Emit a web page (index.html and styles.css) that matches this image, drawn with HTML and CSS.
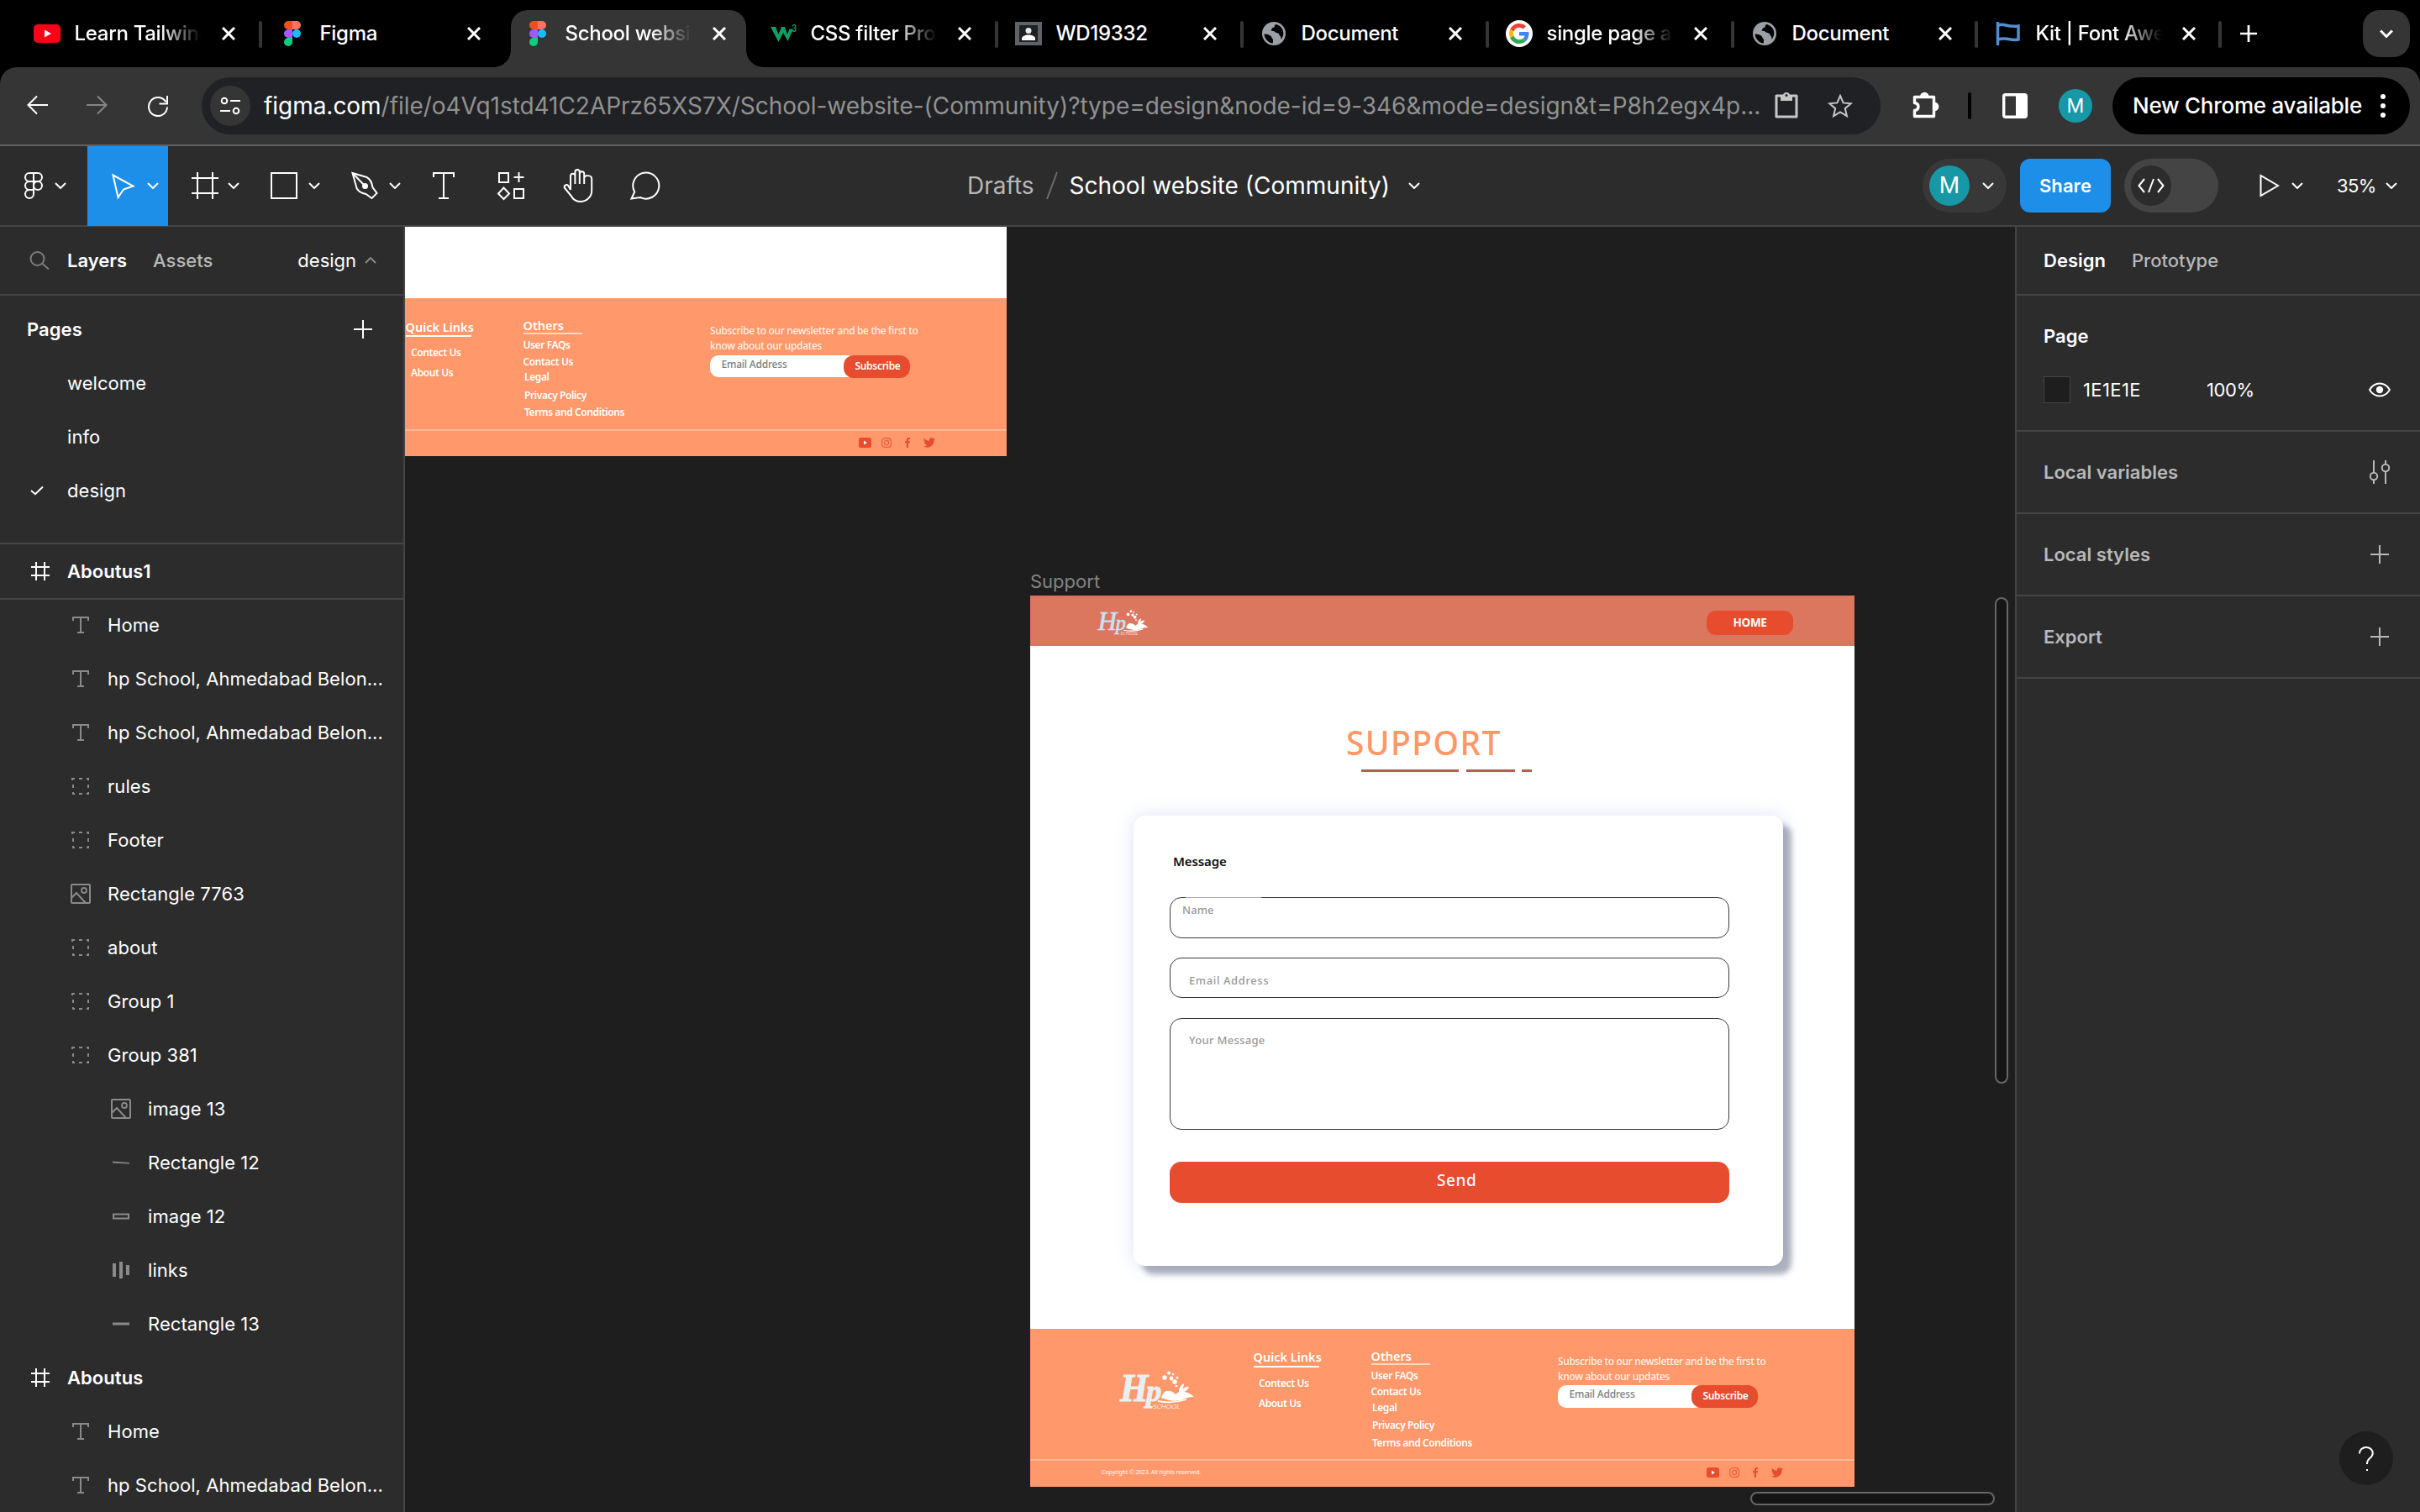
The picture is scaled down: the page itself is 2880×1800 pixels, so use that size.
FILE: index.html
```
<!DOCTYPE html>
<html lang="en">
<head>
<meta charset="utf-8">
<title>School website (Community)</title>
<link rel="stylesheet" href="styles.css">
</head>
<body>
<svg class="sprite" aria-hidden="true">
  <symbol id="x" viewBox="0 0 16 16"><path d="M1 1l14 14M15 1L1 15" stroke="#fff" stroke-width="3" fill="none"/></symbol>
  <symbol id="chev" viewBox="0 0 14 8"><path d="M1 1l6 6 6-6" stroke="currentColor" fill="none"/></symbol>
  <symbol id="plus" viewBox="0 0 22 22"><path d="M11 0v22M0 11h22" stroke="currentColor"/></symbol>
  <symbol id="figma" viewBox="0 0 20 30"><path d="M10 0H5a5 5 0 0 0 0 10h5z" fill="#f24e1e"/><path d="M10 0h5a5 5 0 0 1 0 10h-5z" fill="#ff7262"/><path d="M10 10H5a5 5 0 0 0 0 10h5z" fill="#a259ff"/><circle cx="15" cy="15" r="5" fill="#1abcfe"/><path d="M10 20H5a5 5 0 1 0 5 5z" fill="#0acf83"/></symbol>
  <symbol id="globe" viewBox="0 0 28 28"><circle cx="14" cy="14" r="14" fill="#9aa0a6"/><path d="M2.5 14.500c3.500.2 6 .6 8 2.600 1 1 .5 2.200 1.800 2.800 1.200.6.6 2.500.5 5.600C7.500 25 3 20.500 2.500 14.500zM17 3c-1.500 0-2.300 1.200-2.200 2.600.1 1.500-1.800.9-2.800 1.900-1.200 1.200-.2 2.300-2 3 2.500.6 4.500.2 6 2 .8 1 2.200 1 3.300 1.200 1.700.4.600 2.400 2 3 .9.400 1.400 2 1.200 4.200C27.500 15 26 6 17 3z" fill="#000"/></symbol>
  <symbol id="hash" viewBox="0 0 24 24"><path d="M7 1v22M17 1v22M1 7h22M1 17h22" stroke="#fff" stroke-width="2"/></symbol>
  <symbol id="t" viewBox="0 0 24 24"><path d="M3 7V3h18v4M12 3v18M8 21h8" stroke="#8a8a8a" stroke-width="2" fill="none"/></symbol>
  <symbol id="group" viewBox="0 0 24 24"><path d="M2 5V3h3M10 3h4M19 3h2v2M21 10v4M21 19v2h-2M14 21h-4M5 21H3v-2M3 14v-4" stroke="#8a8a8a" stroke-width="2" fill="none"/></symbol>
  <symbol id="img" viewBox="0 0 24 24"><rect x="1" y="1" width="22" height="22" rx="1" stroke="#8a8a8a" stroke-width="2" fill="none"/><circle cx="16" cy="8" r="3" stroke="#8a8a8a" stroke-width="1.800" fill="none"/><path d="M1 17l6-6 11 12" stroke="#8a8a8a" stroke-width="2" fill="none"/></symbol>
  <symbol id="yt" viewBox="0 0 15 12"><rect width="15" height="12" rx="2.500" fill="#e74c2e"/><path d="M6 3.500v5L9.800 6z" fill="#fff"/></symbol>
  <symbol id="ig" viewBox="0 0 12 12"><rect x=".7" y=".7" width="10.600" height="10.600" rx="3" fill="none" stroke="#e9603f" stroke-width="1.200"/><circle cx="6" cy="6" r="2.600" fill="none" stroke="#e9603f" stroke-width="1.200"/><circle cx="9" cy="3" r=".7" fill="#e9603f"/></symbol>
  <symbol id="fb" viewBox="0 0 6 12"><path d="M6 .1V2H5c-.8 0-1 .4-1 1v1.300h2l-.3 2H4V12H1.800V6.300H0v-2h1.800V2.700C1.800.9 2.900 0 4.500 0z" fill="#e74c2e"/></symbol>
  <symbol id="tw" viewBox="0 0 24 20"><path d="M24 2.400c-.9.400-1.800.6-2.800.8 1-.6 1.800-1.600 2.200-2.700-1 .6-2 1-3.100 1.200a4.900 4.900 0 0 0-8.400 4.500C7.700 6 4.100 4 1.700.9.400 3.200 1 6 3.200 7.500c-.8 0-1.600-.3-2.200-.6 0 2.300 1.600 4.400 3.900 4.900-.7.200-1.500.2-2.200.1a4.900 4.900 0 0 0 4.600 3.400A9.900 9.900 0 0 1 0 17.300 14 14 0 0 0 21.500 4.900c1-.7 1.800-1.600 2.500-2.500z" fill="#e74c2e"/></symbol>
  <symbol id="swan" viewBox="0 0 90 46">
    <path d="M50 32c2-6 5-9 9-8 4 0 6 2 8 4l4-3c0-5 2-8 6-10 0 3-1 5-2 7 3-3 6-4 8-3-1 3-3 5-6 6 4 0 9 3 12 6-6 0-9 1-16 4-8 2-15 0-23-3z" fill="#fff"/>
    <path d="M46 36c10 2 22 2 34-2" stroke="#fff" stroke-width="1.800" fill="none"/>
    <g fill="#fff"><circle cx="54" cy="8" r="2.700"/><circle cx="59" cy="2.500" r="2"/><circle cx="62" cy="9" r="2.400"/><circle cx="66" cy="13" r="2.800"/><circle cx="64" cy="4" r="1.300"/><circle cx="69" cy="8" r="1.500"/><circle cx="68" cy="18" r="1.300"/></g>
  </symbol>
</svg>

<header class="chrome">
  <div class="tabs">
    <div class="tab"><span class="fav"><svg width="32" height="22" viewBox="0 0 32 22"><rect width="32" height="22" rx="5" fill="#ff0016"/><path d="M13 6.500v9l8-4.500z" fill="#fff"/></svg></span><span class="name fade">Learn Tailwind</span><svg class="close"><use href="#x"/></svg></div>
    <div class="tab nosep"><span class="fav"><svg width="20" height="30"><use href="#figma"/></svg></span><span class="name">Figma</span><svg class="close"><use href="#x"/></svg></div>
    <div class="tab active nosep"><span class="fav"><svg width="20" height="30"><use href="#figma"/></svg></span><span class="name fade">School website</span><svg class="close"><use href="#x"/></svg></div>
    <div class="tab"><span class="fav"><svg width="34" height="26" viewBox="0 0 34 26"><path d="M2 5h6l3.500 9L15 5h4l3 9 2.500-6.500H29L22.500 22 17 12l-5.500 11z" fill="#0f9f63"/><text x="27" y="11" font-family="Inter, sans-serif" font-weight="600" font-size="12" fill="#0f9f63" textLength="6" lengthAdjust="spacingAndGlyphs">3</text></svg></span><span class="name fade">CSS filter Prop</span><svg class="close"><use href="#x"/></svg></div>
    <div class="tab"><span class="fav"><svg width="32" height="28" viewBox="0 0 32 28"><rect width="32" height="28" fill="#5f6368"/><rect x="5" y="4" width="22" height="20" fill="#202124"/><circle cx="16" cy="10.500" r="3.500" fill="#e8eaed"/><path d="M8 22v-2c0-3 4-4.500 8-4.500s8 1.500 8 4.500v2z" fill="#fff"/></svg></span><span class="name">WD19332</span><svg class="close"><use href="#x"/></svg></div>
    <div class="tab"><span class="fav"><svg width="28" height="28"><use href="#globe"/></svg></span><span class="name">Document</span><svg class="close"><use href="#x"/></svg></div>
    <div class="tab"><span class="fav google"><svg width="24" height="24" viewBox="0 0 48 48"><path fill="#EA4335" d="M24 9.500c3.540 0 6.710 1.220 9.210 3.600l6.850-6.850C35.900 2.380 30.470 0 24 0 14.620 0 6.510 5.380 2.560 13.220l7.980 6.190C12.430 13.720 17.740 9.500 24 9.500z"/><path fill="#4285F4" d="M46.980 24.550c0-1.570-.15-3.090-.38-4.550H24v9.020h12.940c-.58 2.960-2.260 5.480-4.780 7.180l7.730 6c4.510-4.180 7.090-10.360 7.090-17.650z"/><path fill="#FBBC05" d="M10.530 28.590c-.48-1.450-.76-2.990-.76-4.590s.27-3.140.76-4.590l-7.980-6.190C.92 16.460 0 20.120 0 24c0 3.880.92 7.540 2.560 10.780l7.970-6.190z"/><path fill="#34A853" d="M24 48c6.480 0 11.930-2.130 15.890-5.810l-7.730-6c-2.150 1.450-4.920 2.300-8.160 2.300-6.260 0-11.570-4.220-13.470-9.910l-7.980 6.190C6.510 42.620 14.620 48 24 48z"/></svg></span><span class="name fade">single page ap</span><svg class="close"><use href="#x"/></svg></div>
    <div class="tab narrow"><span class="fav"><svg width="28" height="28"><use href="#globe"/></svg></span><span class="name">Document</span><svg class="close"><use href="#x"/></svg></div>
    <div class="tab narrow"><span class="fav"><svg width="30" height="28" viewBox="0 0 30 28" fill="none" stroke="#538dd7"><path d="M2.500 0v28" stroke-width="3.500"/><path d="M3 4.500c6-4 10 2.500 24 .5v16c-9 2.500-13-3.500-24 0" stroke-width="3.500"/></svg></span><span class="name fade">Kit | Font Awes</span><svg class="close"><use href="#x"/></svg></div>
    <svg class="newtab"><use href="#plus"/></svg>
    <button class="tabmenu"><svg class="big" width="16" height="10"><use href="#chev"/></svg></button>
  </div>
  <div class="bar">
    <div class="nav">
      <svg width="26" height="24" viewBox="0 0 26 24" fill="none" stroke="#fff" stroke-width="2.800"><path d="M26 12H3M13 1.500L2.500 12 13 22.500"/></svg>
      <svg width="26" height="24" viewBox="0 0 26 24" fill="none" stroke="#868686" stroke-width="2.800"><path d="M0 12h23M13 1.500L23.500 12 13 22.500"/></svg>
      <svg width="26" height="26" viewBox="0 0 26 26" fill="none" stroke="#fff" stroke-width="2.800"><path d="M22.500 8.500A11 11 0 1 0 24 14.500M24 1v9.500h-9.500"/></svg>
    </div>
    <div class="omni">
      <span class="site"><svg width="24" height="22" viewBox="0 0 24 22" fill="none" stroke="#fff" stroke-width="2.800"><circle cx="5" cy="5" r="3.300"/><path d="M12 5h12M0 17h12"/><circle cx="19" cy="17" r="3.300"/></svg></span>
      <span class="url"><b>figma.com</b>/file/o4Vq1std41C2APrz65XS7X/School-website-(Community)?type=design&amp;node-id=9-346&amp;mode=design&amp;t=P8h2egx4p...</span>
      <svg class="clip" width="30" height="32" viewBox="0 0 30 32"><path d="M3 5h24v25H3z" fill="none" stroke="#c7c7c7" stroke-width="3" stroke-linejoin="round"/><path d="M8 5h3a4 4 0 0 1 8 0h3v6H8z" fill="#c7c7c7"/><circle cx="15" cy="4.500" r="1.500" fill="#202124"/></svg>
      <svg class="star" width="32" height="32" viewBox="0 0 32 32" fill="none" stroke="#c7c7c7" stroke-width="2.800"><path d="M16 4l3.600 8.400 9.100.8-6.900 6 2.100 8.900-7.900-4.700-7.900 4.700 2.100-8.900-6.900-6 9.100-.8z"/></svg>
    </div>
    <svg class="ext" width="34" height="34" viewBox="0 0 34 34"><path d="M3.500 7.500h23v23h-23v-7c6-1 6-8 0-9z" fill="none" stroke="#fff" stroke-width="3.400" stroke-linejoin="round"/><path d="M11 7a4.300 4.300 0 0 1 8.600 0zM27 14.500a4.300 4.300 0 0 1 0 8.800z" fill="#fff" stroke="#fff"/></svg>
    <i class="vsep"></i>
    <svg class="panel" width="30" height="30" viewBox="0 0 30 30"><rect x="1.700" y="1.700" width="26.600" height="26.600" rx="2" fill="none" stroke="#fff" stroke-width="3.400"/><path d="M16 2h12v26H16z" fill="#fff"/></svg>
    <span class="ava sm">M</span>
    <div class="update"><span>New Chrome available</span><svg width="6" height="28" viewBox="0 0 6 28" fill="#fff"><circle cx="3" cy="3" r="3"/><circle cx="3" cy="14" r="3"/><circle cx="3" cy="25" r="3"/></svg></div>
  </div>
</header>

<div class="toolbar">
  <button class="tool menu"><svg width="32" height="32" viewBox="-5 0 32 32"><path d="M11 1H6a5 5 0 0 0 0 10h5zM11 1h5a5 5 0 0 1 0 10h-5zM11 11H6a5 5 0 0 0 0 10h5zM11 21H6a5 5 0 1 0 5 5z"/><circle cx="16" cy="16" r="5"/></svg><svg class="chev"><use href="#chev"/></svg></button>
  <button class="tool on"><svg width="32" height="32" viewBox="0 0 32 32"><path d="M4.500 3.500l24 13-11.500 4L10.500 30z"/></svg><svg class="chev"><use href="#chev"/></svg></button>
  <button class="tool"><svg width="32" height="32" viewBox="-2 0 32 32" overflow="visible"><path d="M7 0v32M25 0v32M0 7h32M0 25h32"/></svg><svg class="chev"><use href="#chev"/></svg></button>
  <button class="tool"><svg width="32" height="32" viewBox="0 0 32 32"><path d="M1 1h30v30H1z"/></svg><svg class="chev"><use href="#chev"/></svg></button>
  <button class="tool"><svg width="32" height="32" viewBox="0 0 32 32"><path d="M1.500 1l17 5c4 2 6 6 7 12l5 7-6 6-7-5c-6-1-9-3-11-7zM1.500 1L15 15"/><circle cx="16.500" cy="16.500" r="2.500" fill="#fff"/></svg><svg class="chev"><use href="#chev"/></svg></button>
  <button class="tool one"><svg width="26" height="32" viewBox="0 0 26 32"><path d="M1 6V1h24v5M13 1v30M7 31h12"/></svg></button>
  <button class="tool one"><svg width="32" height="32" viewBox="0 0 32 32"><path d="M2 1h11v11H2zM20 20h11v11H20zM25.500 0v12M19.500 6h12M7.500 18.500l6.500 7-6.500 6.500L1 25.500z"/></svg></button>
  <button class="tool one"><svg width="36" height="40" viewBox="0 0 36 40"><path d="M9 25V8.500a2.700 2.700 0 0 1 5.400 0V18M14.400 9V3.800a2.700 2.700 0 0 1 5.400 0V18M19.800 6a2.700 2.700 0 0 1 5.400 0v12M25.200 11c0-4 9-4 9 1v14c0 8-7 13-13.600 13-6 0-9-3-11-7L1.800 22.500c-1-3 2.700-4.500 4.400-2.500L9 25"/></svg></button>
  <button class="tool one"><svg width="36" height="34" viewBox="0 0 36 34"><path d="M1.500 32.500l3.700-8A15.500 15.500 0 1 1 12 31z"/></svg></button>
  <div class="crumbs"><span class="drafts">Drafts</span><svg width="14" height="32" viewBox="0 0 14 32"><path d="M13 0L1 32" stroke="#6b6b6b" stroke-width="2"/></svg><span>School website (Community)</span><svg class="chev"><use href="#chev"/></svg></div>
  <div class="actions">
    <div class="who"><span class="ava">M</span><svg class="chev"><use href="#chev"/></svg></div>
    <button class="share">Share</button>
    <div class="toggle"><span><svg width="32" height="18" viewBox="0 0 32 18" fill="none" stroke="#fff" stroke-width="2"><path d="M8 1L1.500 9 8 17M24 1l6.500 8L24 17M19 1l-6 16"/></svg></span></div>
    <svg class="play" width="24" height="28" viewBox="0 0 24 28" fill="none" stroke="#fff" stroke-width="2"><path d="M1.500 2v24L22 14z"/></svg>
    <svg class="chev"><use href="#chev"/></svg>
    <span class="zoom">35%</span>
    <svg class="chev"><use href="#chev"/></svg>
  </div>
</div>

<main class="work">
  <aside class="left">
    <div class="ltabs"><svg class="search" width="24" height="24" viewBox="0 0 24 24" fill="none" stroke="#7d7d7d" stroke-width="2"><circle cx="9.500" cy="10" r="8"/><path d="M15 15.500l8 7"/></svg><b>Layers</b><b class="dim">Assets</b><span class="pg">design</span><svg class="chev up"><use href="#chev"/></svg></div>
    <div class="pages">
      <div class="phead"><b>Pages</b><svg width="22" height="22"><use href="#plus"/></svg></div>
      <div class="page">welcome</div>
      <div class="page">info</div>
      <div class="page sel"><svg width="16" height="12" viewBox="0 0 16 12" fill="none" stroke="#fff" stroke-width="3"><path d="M1 6l5 4.200L15 1.500"/></svg>design</div>
    </div>
    <div class="row top first"><svg><use href="#hash"/></svg>Aboutus1</div>
    <div class="row"><svg><use href="#t"/></svg>Home</div>
    <div class="row"><svg><use href="#t"/></svg>hp School, Ahmedabad Belon...</div>
    <div class="row"><svg><use href="#t"/></svg>hp School, Ahmedabad Belon...</div>
    <div class="row"><svg><use href="#group"/></svg>rules</div>
    <div class="row"><svg><use href="#group"/></svg>Footer</div>
    <div class="row"><svg><use href="#img"/></svg>Rectangle 7763</div>
    <div class="row"><svg><use href="#group"/></svg>about</div>
    <div class="row"><svg><use href="#group"/></svg>Group 1</div>
    <div class="row"><svg><use href="#group"/></svg>Group 381</div>
    <div class="row sub"><svg><use href="#img"/></svg>image 13</div>
    <div class="row sub"><svg viewBox="0 0 24 24"><path d="M2 10.500l20 1.500v1.500L2 12.500z" fill="#8a8a8a"/></svg>Rectangle 12</div>
    <div class="row sub"><svg viewBox="0 0 24 24"><path d="M3 9.500h18v5H3z" fill="none" stroke="#8a8a8a" stroke-width="2"/></svg>image 12</div>
    <div class="row sub"><svg viewBox="0 0 24 24"><path d="M2 4h4v16H2zM10 2h4v20h-4zM18 6h4v12h-4z" fill="#8a8a8a"/></svg>links</div>
    <div class="row sub"><svg viewBox="0 0 24 24"><path d="M2 10.500h20v3H2z" fill="#8a8a8a"/></svg>Rectangle 13</div>
    <div class="row top"><svg><use href="#hash"/></svg>Aboutus</div>
    <div class="row"><svg><use href="#t"/></svg>Home</div>
    <div class="row"><svg><use href="#t"/></svg>hp School, Ahmedabad Belon...</div>
  </aside>

  <section class="canvas">
    <div class="frame about">
      <footer class="foot">
        <div class="fmain">
          <div></div>
          <div class="quick"><h4>Quick Links</h4><p>Contect Us</p><p>About Us</p></div>
          <div class="others"><h4>Others</h4><p>User FAQs</p><p>Contact Us</p><p class="legal">Legal</p><p class="privacy">Privacy Policy</p><p class="terms">Terms and Conditions</p></div>
          <div class="news"><p>Subscribe to our newsletter and be the first to<br>know about our updates</p><div class="sub-form"><span class="inp">Email Address</span><span class="btn">Subscribe</span></div></div>
        </div>
        <div class="fbar"><div class="social"><svg class="yt"><use href="#yt"/></svg><svg class="ig"><use href="#ig"/></svg><svg class="fb"><use href="#fb"/></svg><svg class="tw"><use href="#tw"/></svg></div></div>
      </footer>
    </div>

    <div class="label">Support</div>
    <div class="frame support">
      <div class="shead">
        <svg class="hlogo" viewBox="0 0 90 46"><text class="script" x="1" y="36" font-size="46" textLength="33" lengthAdjust="spacingAndGlyphs">H</text><text class="script" x="32" y="36" font-size="36" textLength="18" lengthAdjust="spacingAndGlyphs">p</text><text class="word" x="40" y="44.500" textLength="32" lengthAdjust="spacingAndGlyphs">SCHOOL</text><use href="#swan"/></svg>
        <span class="home">HOME</span>
      </div>
      <h1>SUPPORT</h1>
      <div class="dashes"><i></i><i></i><i></i></div>
      <div class="card">
        <h3>Message</h3>
        <div class="field f-name">Name</div>
        <div class="field f-mail">Email Address</div>
        <div class="field f-msg">Your Message</div>
        <div class="send">Send</div>
      </div>
      <footer class="foot">
        <div class="fmain">
          <svg class="flogo" viewBox="0 0 90 46"><text class="script" x="1" y="36" font-size="46" textLength="33" lengthAdjust="spacingAndGlyphs">H</text><text class="script" x="32" y="36" font-size="36" textLength="18" lengthAdjust="spacingAndGlyphs">p</text><text class="word" x="40" y="44.500" textLength="32" lengthAdjust="spacingAndGlyphs">SCHOOL</text><use href="#swan"/></svg>
          <div class="quick"><h4>Quick Links</h4><p>Contect Us</p><p>About Us</p></div>
          <div class="others"><h4>Others</h4><p>User FAQs</p><p>Contact Us</p><p class="legal">Legal</p><p class="privacy">Privacy Policy</p><p class="terms">Terms and Conditions</p></div>
          <div class="news"><p>Subscribe to our newsletter and be the first to<br>know about our updates</p><div class="sub-form"><span class="inp">Email Address</span><span class="btn">Subscribe</span></div></div>
        </div>
        <div class="fbar"><small>Copyright © 2023. All rights reserved.</small><div class="social"><svg class="yt"><use href="#yt"/></svg><svg class="ig"><use href="#ig"/></svg><svg class="fb"><use href="#fb"/></svg><svg class="tw"><use href="#tw"/></svg></div></div>
      </footer>
    </div>
    <i class="scroll v"></i>
    <i class="scroll h"></i>
  </section>

  <aside class="right">
    <div class="rtabs"><b>Design</b><b class="dim">Prototype</b></div>
    <div class="rpage">
      <b>Page</b>
      <div class="fill"><i class="swatch"></i><span class="hex">1E1E1E</span><span>100%</span><svg width="26" height="18" viewBox="0 0 26 18" fill="none" stroke="#fff" stroke-width="2"><path d="M1 9C4 4 8.500 1.500 13 1.500S22 4 25 9c-3 5-7.500 7.500-12 7.500S4 14 1 9z"/><circle cx="13" cy="9" r="4.200" fill="#fff" stroke="none"/></svg></div>
    </div>
    <div class="rrow"><b>Local variables</b><svg width="24" height="28" viewBox="0 0 24 28" fill="none" stroke="currentColor" stroke-width="2"><path d="M5 0v14.500M5 23v5M19 0v4.500M19 13.500V28"/><circle cx="5" cy="19" r="4.200"/><circle cx="19" cy="9" r="4.200"/></svg></div>
    <div class="rrow"><b>Local styles</b><svg class="p" width="22" height="22"><use href="#plus"/></svg></div>
    <div class="rrow"><b>Export</b><svg class="p" width="22" height="22"><use href="#plus"/></svg></div>
    <span class="help"><svg width="18" height="29" viewBox="0 0 18 29" fill="none" stroke="#fff" stroke-width="2"><path d="M1 8.500C1 4 4.500 1 9 1s7.800 3 7.800 7c0 3-1.800 4.500-3.800 6.200-2.200 1.800-3 3-3 6.800M9 28h2" /></svg></span>
  </aside>
</main>
</body>
</html>
```
FILE: styles.css
```
* { box-sizing: border-box; }
html, body { margin: 0; }
body {
  width: 2880px; height: 1800px; overflow: hidden;
  display: flex; flex-direction: column;
  background: #000; color: #fff;
  font: 22px/32px "Inter", sans-serif; letter-spacing: 0.06px;
}
button { border: 0; padding: 0; background: none; color: inherit; font: inherit; letter-spacing: inherit; }
h1, h3, h4, p { margin: 0; font-weight: 500; }
svg { display: block; flex: none; stroke-width: 2; }
.sprite { position: absolute; width: 0; height: 0; }
.chev { width: 14px; height: 8px; }

/* browser tabs */
.tabs { height: 80px; padding-left: 18px; display: flex; align-items: center; font-size: 24px; font-weight: 500; letter-spacing: -0.3px; }
.tab { width: 292px; height: 80px; display: flex; align-items: center; padding-left: 16px; flex: none; position: relative; }
.tab.narrow { width: 290px; }
.fav { width: 44px; display: flex; justify-content: center; flex: none; }
.google { width: 32px; height: 32px; border-radius: 50%; background: #fff; align-items: center; margin: 0 6px; }
.name { width: 150px; margin-left: 10.5px; white-space: nowrap; overflow: hidden; }
.fade { -webkit-mask: linear-gradient(90deg, #000 68%, transparent 100%); mask: linear-gradient(90deg, #000 68%, transparent 100%); }
.close { width: 16px; height: 16px; margin-left: 25.5px; }
.narrow .close { margin-left: 24px; }
.tab::after { content: ""; position: absolute; right: -2px; top: 25px; width: 4px; height: 32px; border-radius: 2px; background: #353535; }
.tab.nosep::after { display: none; }
.tab.active { z-index: 1; }
.tab.active::before { content: ""; position: absolute; z-index: -1; left: 6px; right: 6px; top: 12px; bottom: 0; background: #353535; border-radius: 20px 20px 0 0; }
.tab.active::after {
  display: block; left: -14px; right: -14px; top: 60px; width: auto; height: 20px; border-radius: 0; z-index: -1;
  background:
    radial-gradient(circle at 0 0, transparent 19.5px, #353535 20px) left / 20px 20px no-repeat,
    radial-gradient(circle at 100% 0, transparent 19.5px, #353535 20px) right / 20px 20px no-repeat;
}
.newtab { width: 20px; height: 20px; margin-left: 24px; stroke-width: 3; }
.tabmenu { width: 56px; height: 56px; margin-left: auto; margin-right: 12px; border-radius: 20px; background: #353535; display: grid; place-items: center; }
.big { stroke-width: 2.6; overflow: visible; }

/* address bar */
.bar { height: 94px; background: #353535; border-bottom: 2px solid #616161; border-radius: 20px 20px 0 0; display: flex; align-items: center; }
.nav { width: 240px; padding-left: 31px; display: flex; gap: 46px; }
.omni { width: 1998px; height: 68px; border-radius: 34px; background: #202124; display: flex; align-items: center; padding-left: 10px; }
.site { width: 48px; height: 48px; border-radius: 50%; background: #353535; display: grid; place-items: center; margin-right: 16px; }
.url { width: 1796px; font-size: 28px; letter-spacing: -0.04px; color: #919191; white-space: nowrap; }
.url b { font-weight: 400; color: #fff; }
.clip { margin: -3px 0 0 1px; }
.star { margin-left: 33px; }
.ext { margin: -2px 0 0 37px; }
.vsep { width: 4px; height: 32px; border-radius: 2px; background: #000; margin-left: 33px; }
.panel { margin-left: 37px; }
.ava { width: 48px; height: 48px; border-radius: 50%; background: #1698a6; display: grid; place-items: center; font-size: 27px; }
.ava.sm { width: 40px; height: 40px; font-size: 23px; margin-left: 37px; }
.update { width: 354px; height: 68px; margin-left: 24px; border-radius: 34px; background: #000; display: flex; align-items: center; justify-content: space-between; padding: 0 29px 0 24px; font-size: 26px; font-weight: 500; letter-spacing: -0.25px; white-space: nowrap; }

/* editor toolbar */
.toolbar { height: 96px; background: #2c2c2c; border-bottom: 2px solid #444; display: flex; align-items: center; }
.tool { width: 96px; height: 95px; padding-left: 26px; display: flex; align-items: center; gap: 13px; flex: none; }
.tool > svg:first-child { fill: none; stroke: #fff; stroke-width: 2; overflow: visible; }
.tool.menu { width: 104px; padding-left: 24px; gap: 9px; }
.tool.on { background: #1d8fe9; }
.tool.one { width: 80px; padding: 0; justify-content: center; }
.crumbs { margin-left: 343px; display: flex; align-items: center; font-size: 28px; letter-spacing: 0; white-space: nowrap; }
.drafts { color: #b8b8b8; margin-right: 14px; }
.crumbs svg + span { margin: 0 22px 0 14px; }
.actions { margin-left: auto; width: 592px; display: flex; align-items: center; }
.who { width: 100px; height: 64px; border-radius: 32px; background: #383838; display: flex; align-items: center; padding-left: 8px; gap: 15px; }
.share { width: 108px; height: 64px; margin: 0 16px; border-radius: 12px; background: #1d8fe9; font-weight: 600; }
.toggle { width: 112px; height: 64px; border-radius: 32px; background: #444; padding: 8px; }
.toggle span { width: 48px; height: 48px; border-radius: 50%; background: #2c2c2c; display: grid; place-items: center; }
.play { margin: 0 14px 0 49px; }
.zoom { margin: 0 11px 0 40px; width: 47px; letter-spacing: -0.6px; }

/* panels */
.work { flex: 1; display: grid; grid-template-columns: 482px 1916px 482px; min-height: 0; }
.left { background: #2c2c2c; border-right: 2px solid #444; overflow: hidden; }
b { font-weight: 600; }
.dim { font-weight: 500; color: #b8b8b8; }
.ltabs { height: 82px; border-bottom: 2px solid #444; display: flex; align-items: center; padding-left: 35px; letter-spacing: 0; }
.ltabs b { margin-left: 21px; }
.ltabs .dim { margin-left: 31px; }
.pg { margin-left: 101px; }
.up { transform: scaleY(-1); color: #8a8a8a; margin-left: 10px; }
.pages { height: 296px; padding-top: 8px; border-bottom: 2px solid #444; }
.phead, .page { height: 64px; display: flex; align-items: center; }
.phead { justify-content: space-between; padding: 0 37px 0 32px; }
.page { padding-left: 80px; }
.sel { padding-left: 36px; }
.sel svg { margin-right: 28px; }
.row { height: 64px; display: flex; align-items: center; padding-left: 84px; gap: 20px; white-space: nowrap; }
.row svg { width: 24px; height: 24px; }
.row.sub { padding-left: 132px; }
.row.top { padding-left: 36px; font-weight: 600; }
.row.first { height: 66px; margin-bottom: -2px; border-bottom: 2px solid #444; }

.right { background: #2c2c2c; border-left: 2px solid #444; position: relative; }
.rtabs { height: 82px; padding-left: 32px; display: flex; align-items: center; gap: 31px; letter-spacing: 0; border-bottom: 2px solid #444; }
.rpage { height: 162px; padding: 32px 35px 0 32px; border-bottom: 2px solid #444; }
.fill { display: flex; align-items: center; margin-top: 32px; }
.swatch { width: 32px; height: 32px; background: #1e1e1e; border: 1px solid #444; margin-right: 15px; }
.hex { width: 147px; letter-spacing: 0.4px; }
.hex + span { letter-spacing: -0.4px; }
.fill svg { margin-left: auto; }
.rrow { height: 98px; display: flex; align-items: center; justify-content: space-between; padding: 0 36px 0 32px; border-bottom: 2px solid #444; color: #b8b8b8; letter-spacing: 0; }
.rrow .p { margin-right: 1px; }
.help { position: absolute; right: 32px; bottom: 32px; width: 64px; height: 64px; border-radius: 50%; background: #1e1e1e; display: grid; place-items: center; }

/* canvas */
.canvas { position: relative; overflow: hidden; background: #1e1e1e; font-family: "Noto Sans", sans-serif; }
.frame { position: absolute; width: 981px; background: #fff; display: flex; flex-direction: column; }
.about { left: -265px; top: -200px; height: 473px; justify-content: flex-end; }
.support { left: 744px; top: 438.5px; height: 1061px; }
.label { position: absolute; left: 744px; top: 406px; font: 22px/32px "Inter", sans-serif; color: #848484; letter-spacing: 0; }
.scroll { position: absolute; background: #151515; border: 2px solid #666; border-radius: 8px; }
.scroll.v { left: 1892px; top: 441px; width: 16px; height: 579px; }
.scroll.h { left: 1601px; top: 1506px; width: 291px; height: 16px; }

.foot { height: 188px; background: #ff986a; font-size: 12px; font-weight: 600; letter-spacing: -0.4px; white-space: nowrap; margin-top: auto; }
.about .foot { margin-top: 0; }
.foot p { font-weight: 600; }
.fmain { height: 155.5px; display: grid; grid-template-columns: 265.5px 140px 222.5px 1fr; }
.flogo { width: 90px; height: 46px; margin: 50px 0 0 106px; color: #e8f1f2; overflow: visible; }
.script { font-family: "Liberation Serif", serif; font-style: italic; fill: currentColor; stroke: currentColor; stroke-width: 1; }
.word { font: italic 7px "Open Sans", sans-serif; fill: #fff; fill-opacity: 0.85; }
.foot h4 { font-size: 14.5px; font-weight: 600; letter-spacing: 0; }
.quick { padding-top: 23.5px; }
.quick h4 { line-height: 20.5px; width: 78px; border-bottom: 2px solid #fff; margin-bottom: 7px; }
.quick p { line-height: 24px; padding-left: 6.5px; }
.others { padding-top: 24px; }
.others h4 { line-height: 17px; width: 70px; border-bottom: 2px solid #ffd9c6; margin-bottom: 4px; }
.others p { line-height: 18px; margin-top: 1.5px; }
.others .legal { margin-top: 0.8px; padding-left: 1.5px; }
.others .privacy { margin-top: 3.6px; padding-left: 1.5px; }
.others .terms { margin-top: 2.4px; padding-left: 1.5px; }
.news { padding-top: 30px; }
.news p { font-weight: 500; line-height: 18.4px; letter-spacing: -0.35px; color: #fff0e8; }
.sub-form { margin-top: 1px; display: flex; align-items: flex-start; line-height: 22px; font-weight: 500; letter-spacing: -0.2px; }
.inp { width: 174px; height: 26.5px; border-radius: 10px; background: #fff; color: #7d7d7d; padding-left: 13.5px; }
.btn { width: 79px; height: 27px; margin-left: -15px; line-height: 25px; border-radius: 12px; background: #e74c2e; text-align: center; padding-left: 2px; font-weight: 600; letter-spacing: -0.3px; }
.fbar { height: 32.5px; border-top: 2px solid #ffb795; display: flex; align-items: center; padding: 0 85px 2px 85px; }
.fbar small { font-size: 7px; font-weight: 500; letter-spacing: -0.18px; color: #fff0e8; line-height: 12px; }
.social { margin-left: auto; display: flex; align-items: center; height: 12px; }
.yt { width: 15px; height: 12px; }
.ig { width: 12px; height: 12px; margin-left: 12px; }
.fb { width: 6px; height: 12px; margin-left: 16px; }
.tw { width: 14px; height: 12px; margin-left: 16px; }

.shead { height: 60px; flex: none; background: #dc775f; display: flex; align-items: center; justify-content: space-between; padding: 6px 73px 0 80px; }
.hlogo { width: 61px; height: 31px; color: #c5e4f5; overflow: visible; }
.home { width: 103px; height: 29px; border-radius: 11px; background: #e74c2e; font: 700 13.5px/29px "Open Sans", sans-serif; letter-spacing: -0.3px; text-align: center; }
h1 { font-size: 39px; line-height: 40px; letter-spacing: 1.4px; color: #ff9766; margin: 95.5px 0 0 376px; }
.dashes { display: flex; margin: 12px 0 0 394px; height: 3px; }
.dashes i { width: 116px; background: #b0604c; }
.dashes i:nth-child(2) { width: 58px; margin: 0 8px 0 9px; }
.dashes i:nth-child(3) { width: 12px; }
.card {
  width: 773px; height: 536px; flex: none; margin: 52px 0 0 123px; padding: 44px 64.5px 0 43px; border-radius: 14px; background: #fff;
  box-shadow: 10px 10px 6px rgba(70, 75, 100, 0.42), 0 0 22px rgba(100, 140, 230, 0.24);
  font-size: 13px; font-weight: 500;
}
.card h3 { font-size: 15px; font-weight: 600; line-height: 20px; letter-spacing: -0.1px; color: #111; padding-left: 4px; margin-bottom: 33px; }
.field { height: 48.5px; border: 1.5px solid #3a3a3a; border-radius: 14px; color: #999; line-height: 18px; position: relative; }
.f-name { padding: 5px 0 0 14px; }
.f-name::before { content: ""; position: absolute; left: 18px; top: -1px; width: 90px; height: 1px; background: #aaa; }
.f-mail { margin-top: 23px; padding: 17px 0 0 22px; letter-spacing: 0.6px; }
.f-msg { margin-top: 23.5px; height: 133px; padding: 16.5px 0 0 22px; letter-spacing: 0.3px; }
.send { margin-top: 38.5px; height: 49px; border-radius: 14px; background: #e74c2e; color: #fff; font-size: 19px; font-weight: 500; letter-spacing: 0.6px; line-height: 44px; padding-left: 318px; }
```
